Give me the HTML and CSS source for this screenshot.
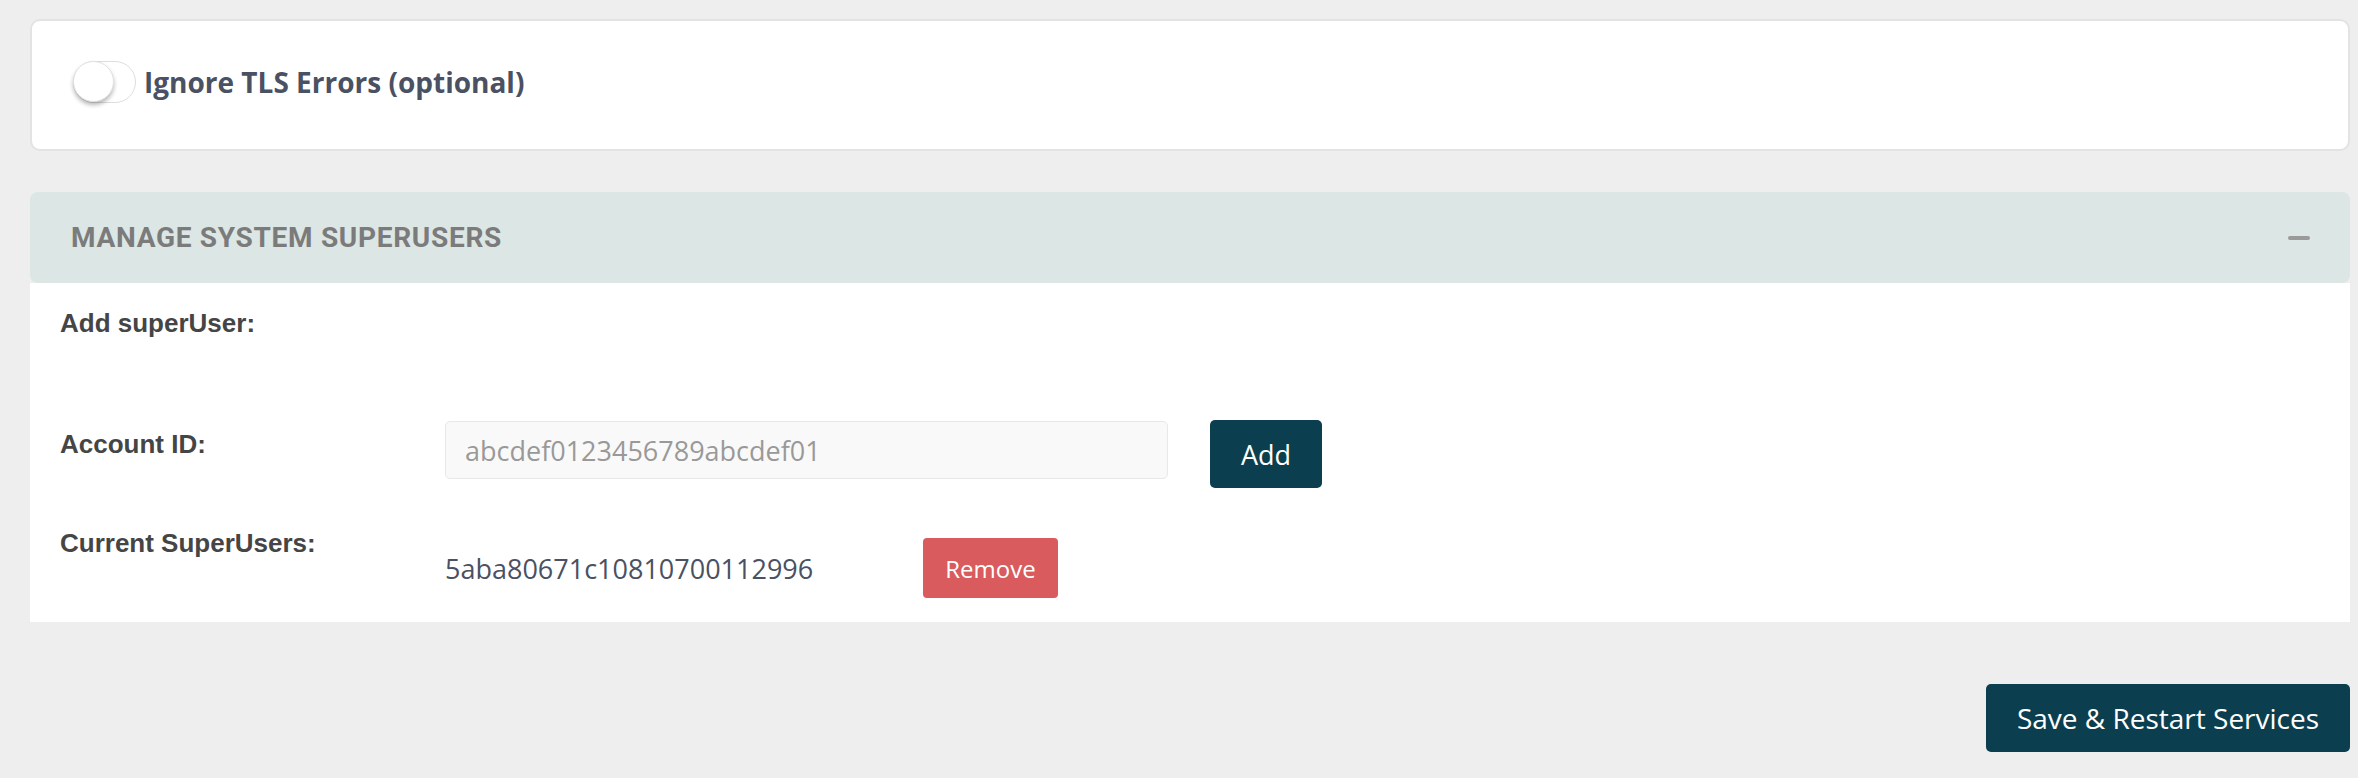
FILE: index.html
```html
<!DOCTYPE html>
<html>
<head>
<meta charset="utf-8">
<link rel="stylesheet" href="styles.css">
</head>
<body>
<div class="page">
  <div class="card tls-card">
    <span class="toggle"><span class="knob"></span></span>
    <span class="tls-label">Ignore TLS Errors (optional)</span>
  </div>

  <div class="panel">
    <div class="panel-header">
      <span class="panel-title">MANAGE SYSTEM SUPERUSERS</span>
      <span class="minus"></span>
    </div>
    <div class="panel-body">
      <div class="row row-add">
        <div class="label">Add superUser:</div>
      </div>
      <div class="row row-account">
        <div class="label label-account">Account ID:</div>
        <div class="content content-account">
          <input class="text-input" type="text" placeholder="abcdef0123456789abcdef01">
          <button class="btn btn-dark btn-add">Add</button>
        </div>
      </div>
      <div class="row row-current">
        <div class="label">Current SuperUsers:</div>
        <div class="content content-current">
          <span class="user-id">5aba80671c10810700112996</span>
          <button class="btn btn-red">Remove</button>
        </div>
      </div>
    </div>
  </div>

  <div class="actions">
    <button class="btn btn-dark btn-save">Save &amp; Restart Services</button>
  </div>
</div>
</body>
</html>
```

FILE: styles.css
```css
* { box-sizing: border-box; }
html, body {
  margin: 0;
  padding: 0;
  background: #eeeeee;
}
.page {
  padding: 19px 8px 0 30px;
  font-family: "Open Sans", "Liberation Sans", sans-serif;
}
.card {
  background: #ffffff;
  border: 2px solid #e3e3e3;
  border-radius: 10px;
}
.tls-card {
  display: flex;
  align-items: center;
  gap: 8px;
  padding: 40px 41px 46px;
}
.toggle {
  position: relative;
  display: inline-block;
  width: 63px;
  height: 42px;
  border: 1.5px solid #dedede;
  border-radius: 21px;
  background: #fff;
  flex: none;
}
.knob {
  position: absolute;
  left: -1px;
  top: -1px;
  width: 41px;
  height: 41px;
  border-radius: 50%;
  background: #fff;
  border: 1px solid #e2e2e2;
  box-shadow: 0 3px 4px rgba(0, 0, 0, 0.28);
}
.tls-label {
  font-family: "Open Sans", sans-serif;
  font-weight: 700;
  font-size: 28px;
  color: #4a5162;
  line-height: 42px;
}
.panel {
  margin-top: 41px;
}
.panel-header {
  height: 91px;
  background: #dce6e4;
  border-radius: 8px;
  display: flex;
  align-items: center;
  justify-content: space-between;
  padding: 0 40px 0 41px;
}
.panel-title {
  font-family: Roboto, "Liberation Sans", sans-serif;
  font-weight: 700;
  font-size: 28px;
  letter-spacing: 0.7px;
  color: #7b7b7b;
}
.minus {
  display: block;
  width: 22px;
  height: 4px;
  border-radius: 2px;
  background: #9a9a9a;
}
.panel-body {
  background: #ffffff;
  padding: 20px 30px 24px;
}
.row {
  display: flex;
  align-items: flex-start;
}
.label {
  width: 385px;
  flex: none;
  font-family: "Liberation Sans", Arial, sans-serif;
  font-weight: 700;
  font-size: 26px;
  line-height: 40px;
  color: #454545;
}
.row-account {
  margin-top: 77px;
}
.label-account {
  margin-top: 4px;
}
.content {
  display: flex;
  align-items: center;
}
.content-account {
  align-items: flex-start;
}
.text-input {
  width: 723px;
  height: 58px;
  margin-top: 1px;
  margin-right: 42px;
  padding: 0 19px;
  background: #f9f9f9;
  border: 1.5px solid #e8e8e8;
  border-radius: 5px;
  font-family: "Open Sans", sans-serif;
  font-size: 27px;
  color: #555;
  outline: none;
}
.text-input::placeholder {
  color: #999999;
}
.btn {
  border: none;
  color: #ffffff;
  font-family: "Open Sans", sans-serif;
  cursor: pointer;
  padding: 0;
}
.btn-dark {
  background: #0b3f4f;
  border-radius: 5px;
}
.btn-add {
  width: 112px;
  height: 68px;
  font-size: 27px;
}
.row-current {
  margin-top: 35px;
}
.content-current {
  padding-top: 15px;
}
.user-id {
  width: 478px;
  font-size: 27px;
  color: #4a5162;
}
.btn-red {
  background: #d95b5e;
  border-radius: 4px;
  width: 135px;
  height: 60px;
  font-size: 24px;
}
.actions {
  display: flex;
  justify-content: flex-end;
  margin-top: 62px;
}
.btn-save {
  width: 364px;
  height: 68px;
  font-size: 28px;
}
```
